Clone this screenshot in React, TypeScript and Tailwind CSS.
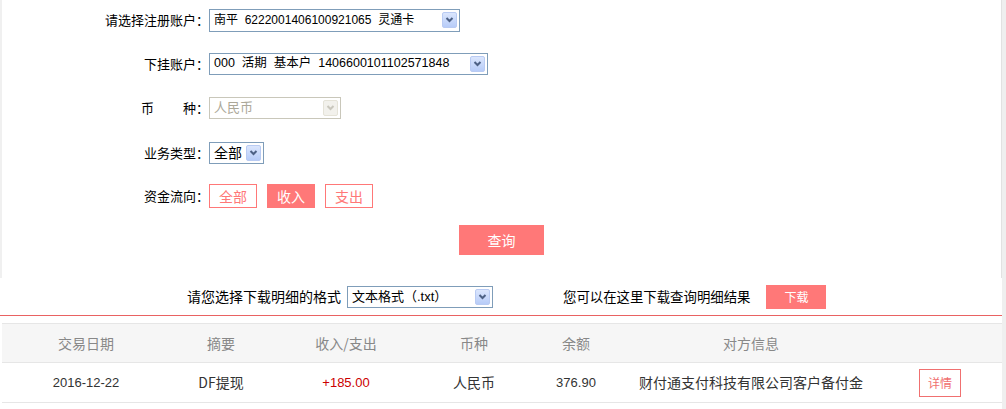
import React from 'react';

const cjk = { fontFamily: '"Noto Sans CJK SC", "Liberation Sans", sans-serif' };
const mixed = { fontFamily: '"Liberation Sans", "Noto Sans CJK SC", sans-serif' };

const Chevron: React.FC<{ disabled?: boolean }> = ({ disabled }) => (
  <svg width="9" height="6" viewBox="0 0 9 6">
    <path d="M1.5 1 L4.5 4 L7.5 1" fill="none" stroke={disabled ? '#c9c7bd' : '#4d6185'} strokeWidth="2" />
  </svg>
);

interface SelectProps {
  value: string;
  width: string;
  height: string;
  text: string;
  disabled?: boolean;
}

const FakeSelect: React.FC<SelectProps> = ({ value, width, height, text, disabled }) => (
  <div
    className={`flex items-center justify-between ${width} ${height} border bg-white pl-[4px] pr-[2px] ${
      disabled ? 'border-[#c9c7ba] text-[#aca899]' : 'border-[#7f9db9] text-black'
    } ${text}`}
    style={mixed}
  >
    <span className="whitespace-pre leading-none">{value}</span>
    <span
      className={`flex h-[16px] w-[15px] items-center justify-center rounded-[2px] border ${
        disabled ? 'border-[#e5e3d8] bg-[#f2f1ec]' : 'border-[#b9cbf3] bg-gradient-to-b from-[#dbe6fd] to-[#b7ccf8]'
      }`}
    >
      <Chevron disabled={disabled} />
    </span>
  </div>
);

const FormRow: React.FC<{ label: React.ReactNode; className: string; children: React.ReactNode }> = ({
  label,
  className,
  children,
}) => (
  <div className={`flex items-center ${className}`}>
    <div className="w-[207px] text-right text-[13px] text-black" style={cjk}>
      {label}
    </div>
    {children}
  </div>
);

const cols = [
  { w: 'w-[168px]', head: '交易日期' },
  { w: 'w-[102px]', head: '摘要' },
  { w: 'w-[148px]', head: '收入/支出' },
  { w: 'w-[108px]', head: '币种' },
  { w: 'w-[96px]', head: '余额' },
  { w: 'w-[254px]', head: '对方信息' },
  { w: 'w-[124px]', head: '' },
];

export default function App() {
  return (
    <div className="flex h-[409px] w-[1006px] bg-white" style={cjk}>
      <div className="flex w-[1002px] flex-col">
        {/* query form */}
        <div className="flex h-[278px] flex-col border-l-[2px] border-r border-l-[#f0f0f0] border-r-[#e2e2e2]">
          <FormRow label="请选择注册账户：" className="mt-[9px] h-[22px]">
            <FakeSelect value="南平  6222001406100921065  灵通卡" width="w-[251px]" height="h-[23px]" text="text-[12px]" />
          </FormRow>
          <FormRow label="下挂账户：" className="mt-[22px] h-[21px]">
            <FakeSelect value="000  活期  基本户  1406600101102571848" width="w-[279px]" height="h-[22px]" text="text-[12.5px]" />
          </FormRow>
          <FormRow
            label={
              <span>
                币<span className="inline-block w-[29px]" />种：
              </span>
            }
            className="mt-[23px] h-[21px]"
          >
            <FakeSelect value="人民币" width="w-[132px]" height="h-[22px]" text="text-[13px]" disabled />
          </FormRow>
          <FormRow label="业务类型：" className="mt-[24px] h-[21px]">
            <FakeSelect value="全部" width="w-[55px]" height="h-[22px]" text="text-[14px]" />
          </FormRow>
          <FormRow label="资金流向：" className="mt-[21px] h-[24px]">
            <div className="flex gap-[10px] text-[14px]">
              <button className="h-[24px] w-[48px] border border-[#ff7878] bg-white text-[#ff7878]">全部</button>
              <button className="h-[24px] w-[48px] border border-[#ff7878] bg-[#ff7878] text-white">收入</button>
              <button className="h-[24px] w-[48px] border border-[#ff7878] bg-white text-[#ff7878]">支出</button>
            </div>
          </FormRow>
          <button className="mx-auto mt-[17px] h-[30px] w-[85px] bg-[#ff7878] text-[14px] text-white">查询</button>
        </div>

        {/* download row */}
        <div className="flex h-[37px] items-center pl-[187px] text-[14px] text-black">
          <span>请您选择下载明细的格式</span>
          <div className="ml-[6px]">
            <FakeSelect value="文本格式（.txt）" width="w-[146px]" height="h-[22px]" text="text-[13px]" />
          </div>
          <span className="ml-[70px] text-[13.4px]">您可以在这里下载查询明细结果</span>
          <button className="ml-[16px] h-[24px] w-[60px] bg-[#ff7878] text-[12px] text-white">下载</button>
        </div>
        <div className="h-px bg-[#e96262]" />

        {/* table */}
        <div className="mt-[7px] pl-[2px]">
          <div className="flex h-[40px] items-center border-y border-[#e6e6e6] bg-[#f6f6f6] text-[14px] text-[#888]">
            {cols.map((c, i) => (
              <div key={i} className={`${c.w} text-center`}>
                {c.head}
              </div>
            ))}
          </div>
          <div className="flex h-[40px] items-center border-b border-[#e6e6e6] text-[#333]">
            <div className="w-[168px] text-center text-[13px]" style={mixed}>2016-12-22</div>
            <div className="w-[102px] text-center text-[14px]">DF提现</div>
            <div className="w-[148px] text-center text-[13px] text-[#cc0000]" style={mixed}>+185.00</div>
            <div className="w-[108px] text-center text-[14px]">人民币</div>
            <div className="w-[96px] text-center text-[13px]" style={mixed}>376.90</div>
            <div className="w-[254px] text-center text-[14px]">财付通支付科技有限公司客户备付金</div>
            <div className="flex w-[124px] justify-center">
              <button className="h-[28px] w-[42px] border border-[#f07070] text-[12px] text-[#f07070]">详情</button>
            </div>
          </div>
        </div>
      </div>
      <div className="w-[4px] bg-[#efefef]" />
    </div>
  );
}
